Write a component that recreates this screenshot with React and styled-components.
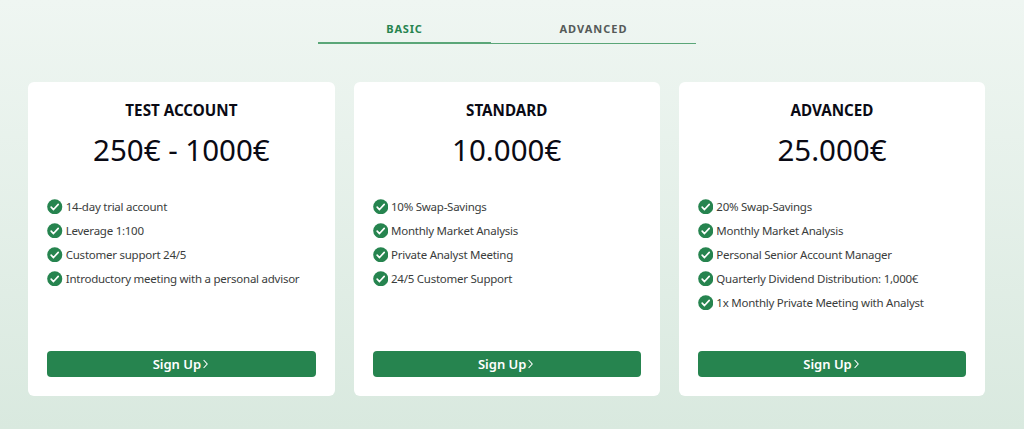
import React from "react";
import styled, { createGlobalStyle } from "styled-components";

const plans = [
  {
    name: "TEST ACCOUNT",
    price: "250€ - 1000€",
    features: [
      "14-day trial account",
      "Leverage 1:100",
      "Customer support 24/5",
      "Introductory meeting with a personal advisor",
    ],
  },
  {
    name: "STANDARD",
    price: "10.000€",
    features: [
      "10% Swap-Savings",
      "Monthly Market Analysis",
      "Private Analyst Meeting",
      "24/5 Customer Support",
    ],
  },
  {
    name: "ADVANCED",
    price: "25.000€",
    features: [
      "20% Swap-Savings",
      "Monthly Market Analysis",
      "Personal Senior Account Manager",
      "Quarterly Dividend Distribution: 1,000€",
      "1x Monthly Private Meeting with Analyst",
    ],
  },
];

function CheckIcon() {
  return (
    <CheckSvg viewBox="0 0 16 16">
      <circle cx="8" cy="8" r="7.8" fill="#26844f" />
      <path d="M4.3 8.4l2.4 2.5 4.9-5.4" fill="none" stroke="#fff" strokeWidth="1.7" strokeLinecap="round" strokeLinejoin="round" />
    </CheckSvg>
  );
}

function App() {
  return (
    <>
      <GlobalStyle />
      <Page>
        <Tabs>
          <Tab active>BASIC</Tab>
          <Tab>ADVANCED</Tab>
        </Tabs>
        <Cards>
          {plans.map((plan) => (
            <Card key={plan.name}>
              <Title>{plan.name}</Title>
              <Price>{plan.price}</Price>
              <Features>
                {plan.features.map((feature) => (
                  <Feature key={feature}>
                    <CheckIcon />
                    {feature}
                  </Feature>
                ))}
              </Features>
              <SignUp>
                Sign Up
                <svg width="5" height="10" viewBox="0 0 5 10">
                  <path d="M.6 1l3.6 4-3.6 4" fill="none" stroke="#fff" strokeWidth="1.1" />
                </svg>
              </SignUp>
            </Card>
          ))}
        </Cards>
      </Page>
    </>
  );
}

const GlobalStyle = createGlobalStyle`
  html, body {
    margin: 0;
    padding: 0;
  }
  body {
    font-family: "Noto Sans", "Open Sans", sans-serif;
  }
`;

const Page = styled.div`
  width: 1024px;
  height: 429px;
  box-sizing: border-box;
  overflow: hidden;
  padding-top: 15px;
  background: linear-gradient(180deg, #eff6f2 0%, #d9e9df 100%);
`;

const Tabs = styled.div`
  display: flex;
  width: 378px;
  margin-left: 318px;
`;

const Tab = styled.div`
  box-sizing: border-box;
  width: ${(props) => (props.active ? "173px" : "205px")};
  height: 29px;
  line-height: 27px;
  text-align: center;
  font-size: 11px;
  font-weight: 700;
  letter-spacing: ${(props) => (props.active ? "0.8px" : "1px")};
  color: ${(props) => (props.active ? "#26844f" : "#555a58")};
  border-bottom: ${(props) => (props.active ? "2px" : "1px")} solid #5aa678;
  padding-bottom: ${(props) => (props.active ? "0" : "1px")};
`;

const Cards = styled.div`
  display: flex;
  gap: 19px;
  margin: 38px 0 0 28.25px;
`;

const Card = styled.div`
  display: flex;
  flex-direction: column;
  box-sizing: border-box;
  width: 306.3px;
  height: 314px;
  padding: 18px 19px 19px;
  background: #fff;
  border-radius: 6px;
`;

const Title = styled.h3`
  margin: 0;
  height: 20px;
  line-height: 20px;
  text-align: center;
  font-size: 15.2px;
  font-weight: 700;
  color: #0a0a14;
`;

const Price = styled.div`
  margin-top: 10px;
  height: 40px;
  line-height: 40px;
  text-align: center;
  font-size: 29.5px;
  color: #0a0a14;
`;

const Features = styled.ul`
  list-style: none;
  margin: 24px 0 0;
  padding: 0;
  flex: 1;
`;

const Feature = styled.li`
  display: flex;
  align-items: center;
  gap: 3px;
  height: 24px;
  font-size: 11.5px;
  letter-spacing: -0.25px;
  color: #3a3d3c;
`;

const CheckSvg = styled.svg`
  width: 15.5px;
  height: 15.5px;
  margin-top: 1px;
  flex-shrink: 0;
`;

const SignUp = styled.button`
  display: flex;
  align-items: center;
  justify-content: center;
  gap: 2px;
  height: 26px;
  padding: 0 2px 0 0;
  border: 0;
  border-radius: 4px;
  background: #26844f;
  color: #fff;
  font-family: inherit;
  font-size: 13px;
  font-weight: 600;
`;

export default App;
